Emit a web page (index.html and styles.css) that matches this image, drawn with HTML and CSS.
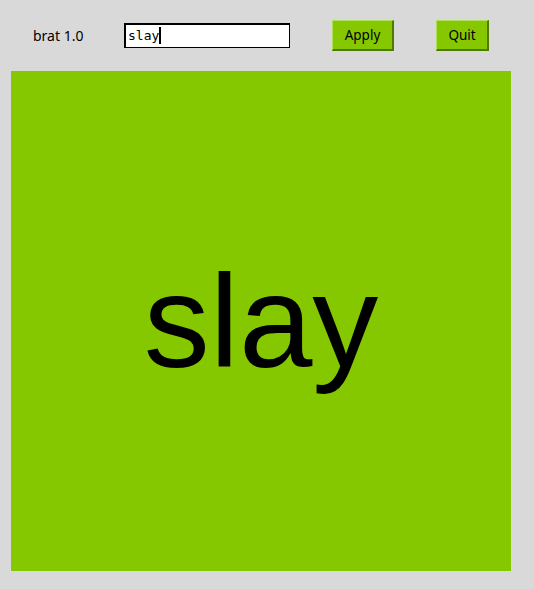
FILE: index.html
```html
<!DOCTYPE html>
<html>
<head>
<meta charset="utf-8">
<link rel="stylesheet" href="styles.css">
</head>
<body>
<div class="app">
  <div class="toolbar">
    <span class="title">brat 1.0</span>
    <div class="entry"><span class="entry-text">slay</span><span class="caret"></span></div>
    <button class="btn btn-apply">Apply</button>
    <button class="btn btn-quit">Quit</button>
  </div>
  <div class="canvas"><span class="canvas-text">slay</span></div>
</div>
</body>
</html>
```

FILE: styles.css
```css
html, body {
  margin: 0;
  padding: 0;
  background: #d9d9d9;
}
.app {
  width: 534px;
  height: 589px;
  background: #d9d9d9;
  font-family: "Noto Sans", "DejaVu Sans", sans-serif;
}
.toolbar {
  height: 70px;
  display: flex;
  align-items: center;
  box-sizing: border-box;
}
.title {
  margin-left: 33px;
  width: 91px;
  font-size: 14px;
  color: #000;
}
.entry {
  width: 166px;
  height: 25px;
  box-sizing: border-box;
  border: 1px solid #000;
  box-shadow: inset 1px 1px 0 #000;
  background: #fff;
  display: flex;
  align-items: center;
  padding-left: 3px;
  font-family: "DejaVu Sans Mono", monospace;
  font-size: 13px;
  color: #000;
}
.caret {
  display: inline-block;
  width: 2px;
  height: 17px;
  background: #000;
}
.btn {
  height: 31px;
  box-sizing: border-box;
  background: #86c800;
  border-style: solid;
  border-width: 1px 2px 2px 1px;
  border-color: #b0e060 #4f7a00 #4f7a00 #b0e060;
  font-family: "Noto Sans", "DejaVu Sans", sans-serif;
  font-size: 13.5px;
  color: #000;
  padding: 0;
}
.btn-apply {
  margin-left: 42px;
  width: 62px;
}
.btn-quit {
  margin-left: 42px;
  width: 53px;
}
.canvas {
  margin-top: 1px;
  margin-left: 11px;
  width: 500px;
  height: 500px;
  background: #86c800;
  display: flex;
  align-items: center;
  justify-content: center;
}
.canvas-text {
  font-family: "Liberation Sans", Arial, sans-serif;
  font-size: 132px;
  color: #000;
  line-height: 1;
  position: relative;
  top: 1px;
}
```
